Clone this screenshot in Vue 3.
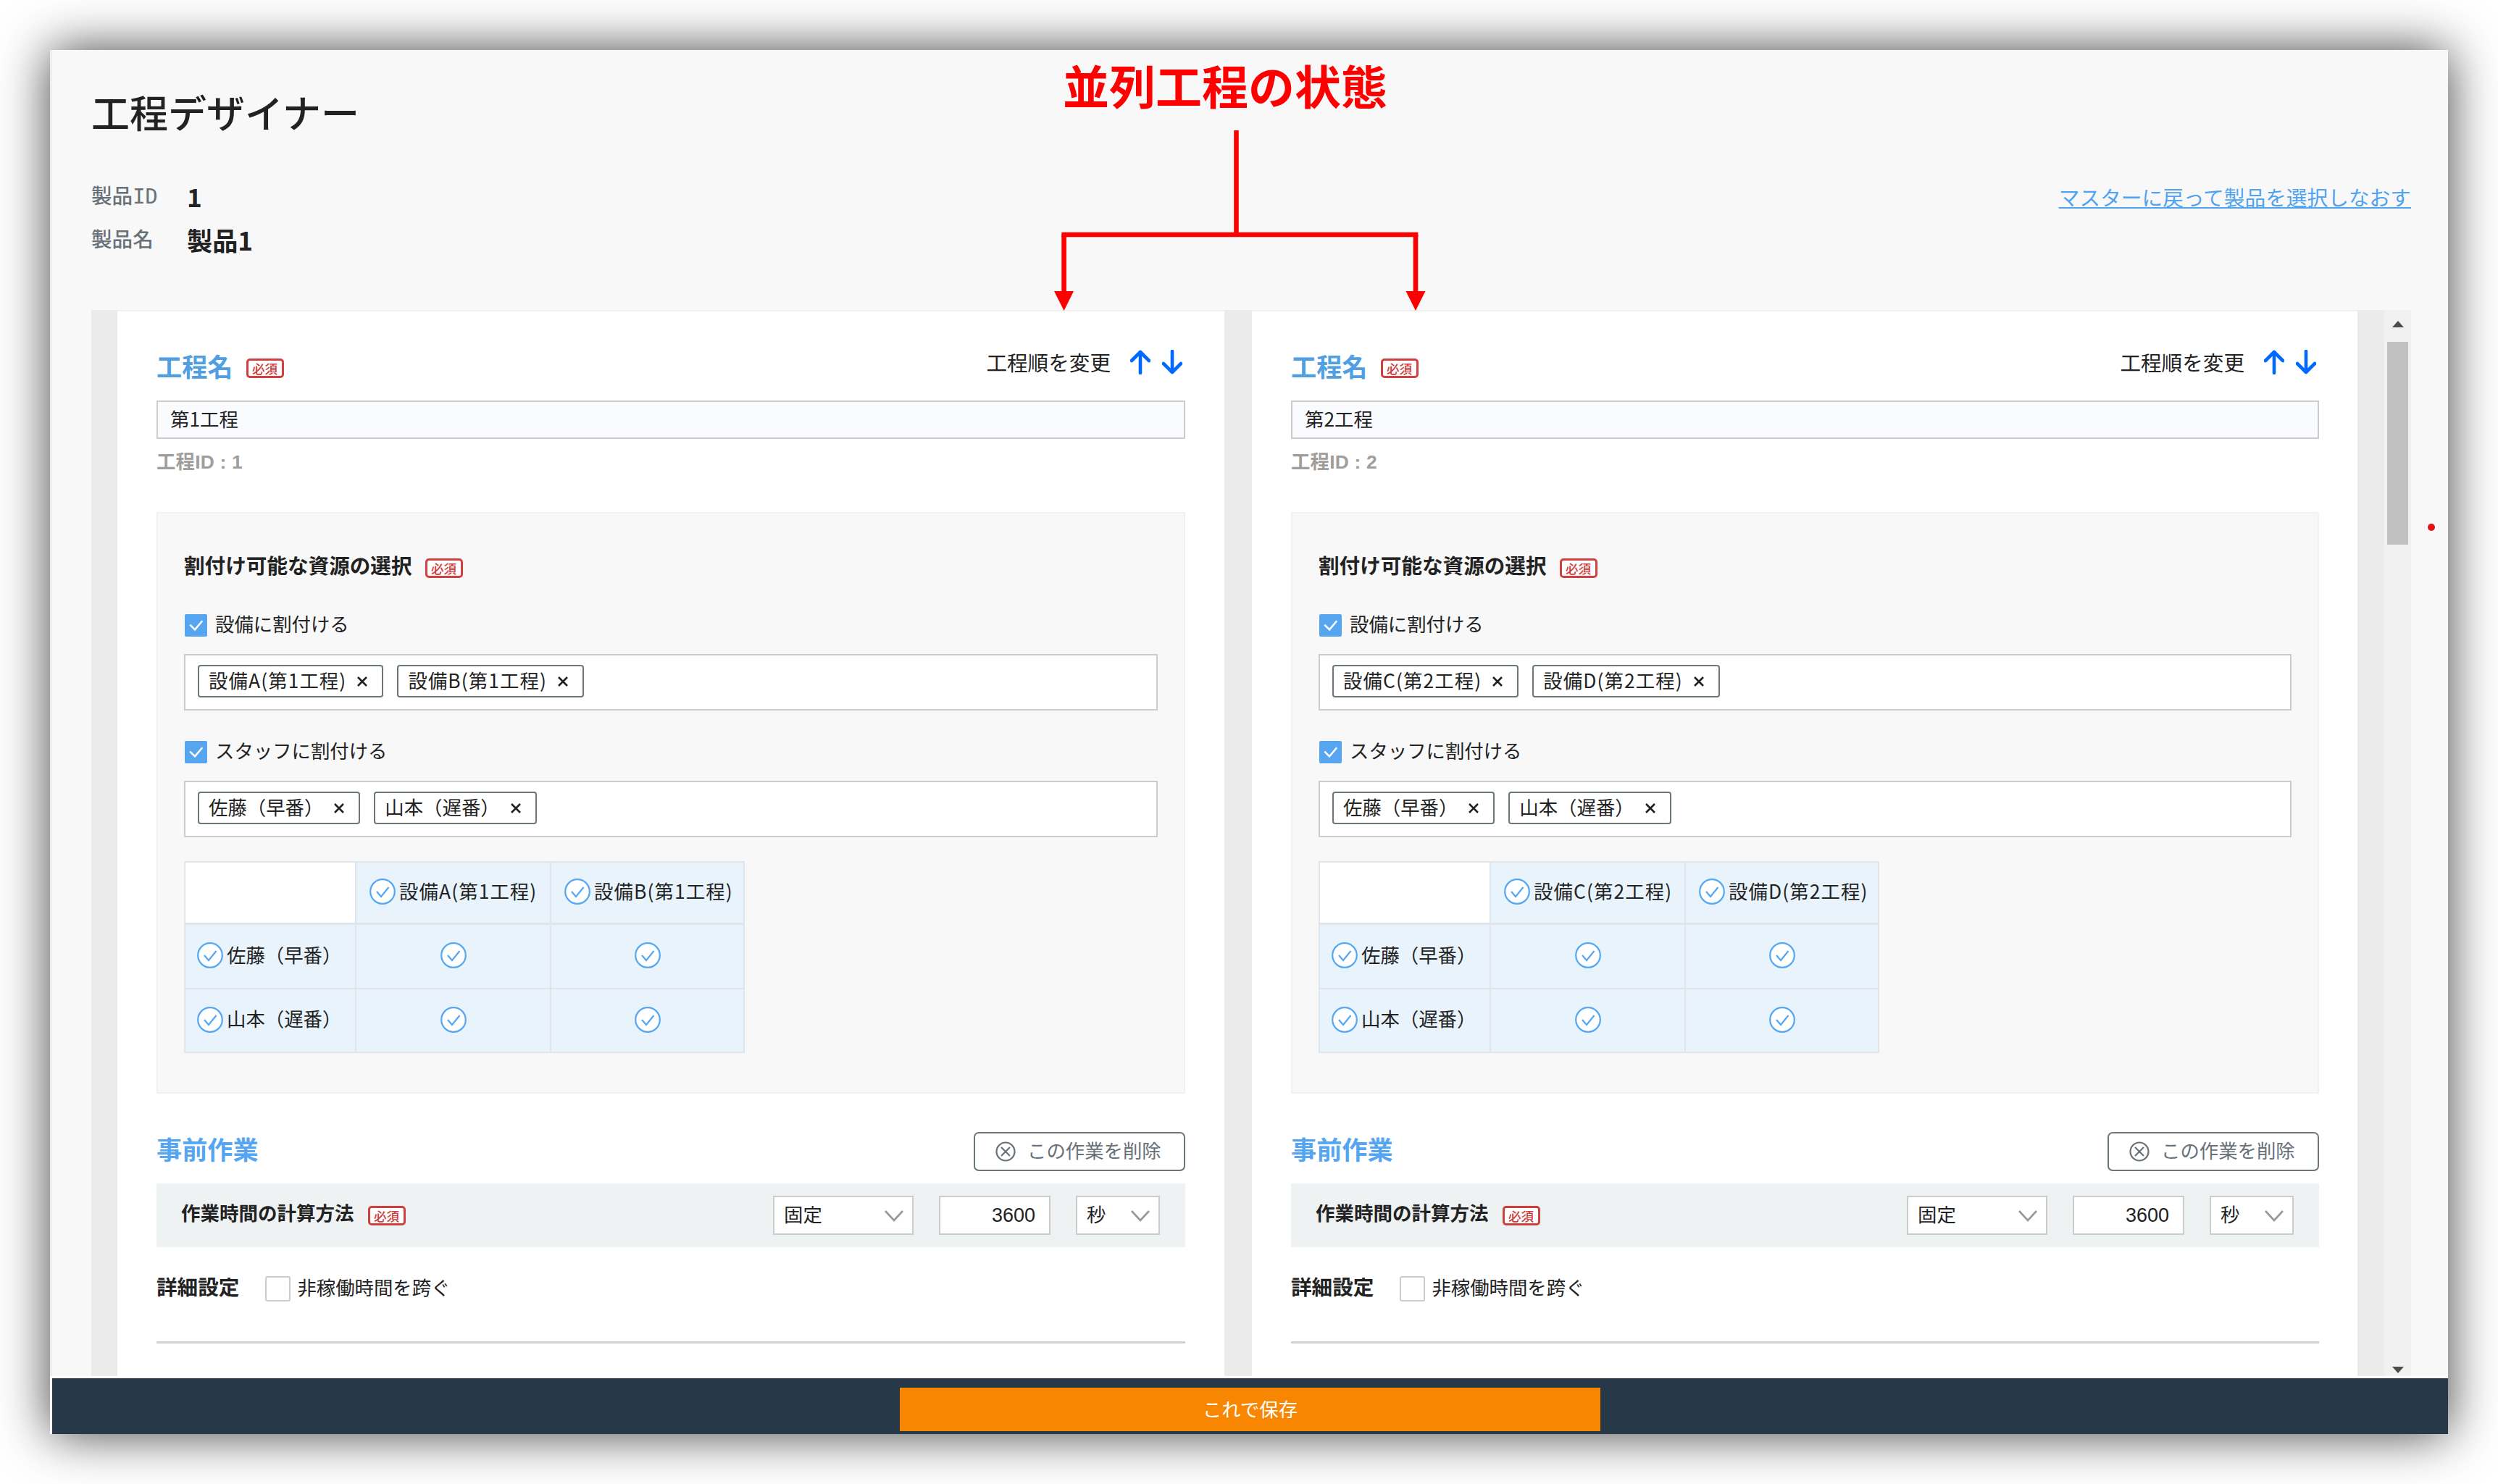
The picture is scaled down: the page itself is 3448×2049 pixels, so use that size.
<template>
  <div class="stage">
    <div class="window">
      <header class="header">
        <h1>工程デザイナー</h1>
        <div class="product">
          <dl>
            <div class="row">
              <dt>製品ID</dt>
              <dd>1</dd>
            </div>
            <div class="row">
              <dt>製品名</dt>
              <dd>製品1</dd>
            </div>
          </dl>
          <a class="back">マスターに戻って製品を選択しなおす</a>
        </div>
      </header>

      <main class="scroll">
        <section class="panel" v-for="p in processes" :key="p.id">
          <div class="panel-head">
            <h2>工程名</h2>
            <span class="required">必須</span>
            <div class="order">
              <span>工程順を変更</span>
              <svg class="arrow" viewBox="0 0 28 34"><path d="M14 32V3M2 15L14 3l12 12" /></svg>
              <svg class="arrow" viewBox="0 0 28 34"><path d="M14 2v29M2 19l12 12 12-12" /></svg>
            </div>
          </div>
          <div class="name-input">{{ p.name }}</div>
          <p class="process-id">工程ID : {{ p.id }}</p>

          <div class="resource">
            <div class="resource-title">
              <h3>割付け可能な資源の選択</h3>
              <span class="required">必須</span>
            </div>
            <template v-for="g in p.groups" :key="g.label">
              <div class="check-row">
                <span class="checkbox checked">
                  <svg viewBox="0 0 32 32"><path d="M7.500 15l7 7L25 9.500" /></svg>
                </span>
                <span class="label">{{ g.label }}</span>
              </div>
              <div class="tags">
                <span class="tag" v-for="t in g.items" :key="t">
                  <span class="label" :class="{ wide: g.wide }">{{ t }}</span>
                  <svg viewBox="0 0 16 16"><path d="M2 2l12 12M14 2L2 14" /></svg>
                </span>
              </div>
            </template>
            <div class="matrix">
              <div class="cell empty"></div>
              <div class="cell head" v-for="m in p.groups[0].items" :key="m">
                <svg class="circle" viewBox="0 0 36 36"><circle cx="18" cy="18" r="16.8" /><path d="M10 18l6 7 10.500-13" /></svg>
                <span class="label wide">{{ m }}</span>
              </div>
              <template v-for="s in p.groups[1].items" :key="s">
                <div class="cell">
                  <svg class="circle" viewBox="0 0 36 36"><circle cx="18" cy="18" r="16.8" /><path d="M10 18l6 7 10.500-13" /></svg>
                  <span class="label">{{ s }}</span>
                </div>
                <div class="cell center" v-for="m in p.groups[0].items" :key="m">
                  <svg class="circle" viewBox="0 0 36 36"><circle cx="18" cy="18" r="16.8" /><path d="M10 18l6 7 10.500-13" /></svg>
                </div>
              </template>
            </div>
          </div>

          <div class="work-head">
            <h2>事前作業</h2>
            <button class="delete">
              <svg viewBox="0 0 28 28"><circle cx="14" cy="14" r="12.500" /><path d="M8 8l12 12M20 8L8 20" /></svg>
              <span class="label">この作業を削除</span>
            </button>
          </div>
          <div class="calc">
            <h4>作業時間の計算方法</h4>
            <span class="required">必須</span>
            <div class="fields">
              <div class="select method">
                <span class="label">固定</span>
                <svg viewBox="0 0 26 16"><path d="M1 1l12 13L25 1" /></svg>
              </div>
              <div class="number">3600</div>
              <div class="select unit">
                <span class="label">秒</span>
                <svg viewBox="0 0 26 16"><path d="M1 1l12 13L25 1" /></svg>
              </div>
            </div>
          </div>
          <div class="detail">
            <h3>詳細設定</h3>
            <span class="checkbox"></span>
            <span>非稼働時間を跨ぐ</span>
          </div>
          <hr />
        </section>

        <div class="scrollbar">
          <svg viewBox="0 0 16 9"><path d="M0 9L8 0l8 9z" /></svg>
          <div class="thumb"></div>
          <svg class="down" viewBox="0 0 16 9"><path d="M0 0h16L8 9z" /></svg>
        </div>
      </main>

      <footer class="footer">
        <button class="save">これで保存</button>
      </footer>
    </div>

    <!-- 注釈 -->
    <div class="note">並列工程の状態</div>
    <svg class="note-lines" viewBox="0 0 520 250">
      <path class="line" d="M255.500 0V147M17.600 222V144M503 222V144" />
      <path class="bar" d="M14.300 144H506.400" />
      <path class="tip" d="M4 222h27L17.600 249zM489.500 222h27L503 249z" />
    </svg>
    <span class="dot"></span>
  </div>
</template>

<script setup>
import { ref } from 'vue';

const staff = ['佐藤（早番）', '山本（遅番）'];

const processes = ref([
  {
    id: 1,
    name: '第1工程',
    groups: [
      { label: '設備に割付ける', items: ['設備A(第1工程)', '設備B(第1工程)'], wide: true },
      { label: 'スタッフに割付ける', items: staff },
    ],
  },
  {
    id: 2,
    name: '第2工程',
    groups: [
      { label: '設備に割付ける', items: ['設備C(第2工程)', '設備D(第2工程)'], wide: true },
      { label: 'スタッフに割付ける', items: staff },
    ],
  },
]);
</script>

<style>
body {
  margin: 0;
  background: #fff;
  overflow: hidden;
}
</style>

<style scoped>
* {
  box-sizing: border-box;
}

h1, h2, h3, h4, p, dl, dd {
  margin: 0;
}

svg {
  display: block;
  flex: none;
  fill: none;
}

.stage {
  position: relative;
  width: 3448px;
  height: 2049px;
  padding: 69px;
  overflow: hidden;
  font-family: "Noto Sans CJK JP", sans-serif;
  font-size: 26.4px;
  line-height: 40px;
  color: #222;
  white-space: nowrap;
}

.window {
  display: flex;
  flex-direction: column;
  width: 3310px;
  height: 1911px;
  background: #f8f8f8;
  border-left: 3px solid #eceff0;
  box-shadow: 0 0 66px rgba(0, 0, 0, 0.75);
}

.label {
  margin-bottom: 4px;
}

.wide {
  letter-spacing: 1.1px;
}

.header {
  height: 359px;
  padding: 45px 51px 0 54px;
}

h1 {
  font-size: 53px;
  font-weight: 500;
  line-height: 80px;
}

.product {
  display: flex;
  justify-content: space-between;
  margin-top: 47px;
}

.row {
  display: flex;
  align-items: center;
  height: 60px;
}

dt {
  width: 132px;
  font-family: "DejaVu Sans Mono", "Noto Sans CJK JP", sans-serif;
  font-size: 28.600px;
  font-weight: 500;
  color: #687078;
}

dd {
  font-size: 35.200px;
  font-weight: 700;
}

.back {
  margin-top: 11px;
  font-size: 28.700px;
  color: #4fa3ef;
  text-decoration: underline;
  text-decoration-thickness: 2px;
  text-underline-offset: 2px;
}

.scroll {
  display: flex;
  height: 1472px;
  margin: 0 51px 0 54px;
  padding-left: 36px;
  overflow: hidden;
  background: #ebebeb;
}

.panel {
  width: 1528px;
  margin-right: 38px;
  padding: 50px 54px 0;
  background: #fff;
  border-top: 2px solid #eef2f2;
}

.panel:nth-child(2) {
  width: 1526px;
  margin-right: 37px;
  padding-right: 53px;
}

.panel-head {
  display: flex;
  align-items: center;
  height: 50px;
}

h2 {
  font-size: 35.200px;
  font-weight: 700;
  line-height: 50px;
  color: #519fe3;
}

.required {
  width: 52px;
  height: 27px;
  margin: 6px 0 0 18px;
  border: 3px solid #d13f3f;
  border-radius: 5px;
  background: #fff;
  color: #cf3a3a;
  font-size: 17.600px;
  font-weight: 500;
  line-height: 21px;
  text-align: center;
}

.order {
  display: flex;
  align-items: center;
  gap: 16px;
  margin: -10px 4px 0 auto;
  font-size: 28.600px;
}

.arrow {
  width: 28px;
  height: 34px;
  stroke: #0069ff;
  stroke-width: 4.600;
  stroke-linecap: round;
  stroke-linejoin: round;
}

.order span {
  margin-right: 11px;
}

.name-input {
  height: 53px;
  margin-top: 23px;
  padding-left: 17px;
  border: 2px solid #ccc;
  background: #fafbfe;
  line-height: 45px;
}

.process-id {
  margin-top: 12px;
  font-family: "Liberation Sans", "Noto Sans CJK JP", sans-serif;
  font-weight: 700;
  letter-spacing: 0.2px;
  color: #a09d9a;
}

.resource {
  height: 803px;
  margin-top: 49px;
  padding: 51px 36px 0;
  background: #f8f8f8;
  border: 2px solid #eef2f2;
}

.resource-title {
  display: flex;
  align-items: center;
}

.resource .required {
  margin-top: 9px;
}

h3 {
  font-size: 28.600px;
  font-weight: 700;
  line-height: 40px;
}

.check-row {
  display: flex;
  align-items: center;
  gap: 10px;
  height: 40px;
  margin-top: 43px;
}

.tags + .check-row {
  margin-top: 37px;
}

.checkbox {
  width: 35px;
  height: 35px;
  border: 2px solid #ccc;
  border-radius: 3px;
  background: #fff;
}

.checkbox.checked {
  width: 33px;
  height: 33px;
  border: 1px solid #fff;
  background: #55a5f0;
}

.checked svg {
  stroke: #fff;
  stroke-width: 2.600;
}

.tags {
  display: flex;
  gap: 19px;
  height: 78px;
  margin-top: 20px;
  padding: 13px 17px;
  border: 2px solid #ccc;
  background: #fff;
}

.tag {
  display: flex;
  align-items: center;
  gap: 14px;
  height: 45px;
  padding: 0 19px 0 13px;
  border: 2px solid #6c7778;
  border-radius: 4px;
}

.tag svg {
  width: 16px;
  height: 16px;
  stroke: #222;
  stroke-width: 2.600;
}

.matrix {
  display: grid;
  grid-template-columns: 236px 269px 267px;
  grid-template-rows: 86px 89px 88px;
  width: 774px;
  margin-top: 33px;
  border: solid #dfe5ea;
  border-width: 2px 0 0 2px;
}

.cell {
  display: flex;
  align-items: center;
  gap: 5px;
  padding: 0 0 3px 16px;
  border: solid #dfe5ea;
  border-width: 0 2px 2px 0;
  background: #e8f3fc;
}

.cell .label {
  margin-bottom: 3px;
}

.cell.empty, .cell.head {
  border-bottom-width: 3px;
}

.cell.head {
  padding-left: 18px;
}

.cell.empty {
  background: #fff;
}

.cell.center {
  justify-content: center;
  padding-left: 0;
}

.circle {
  width: 36px;
  height: 36px;
  stroke: #55a7f2;
  stroke-width: 2.200;
}

.circle circle {
  fill: #fff;
}

.work-head {
  display: flex;
  align-items: center;
  justify-content: space-between;
  height: 54px;
  margin-top: 53px;
}

.work-head h2 {
  margin-top: -8px;
  color: #55a5f0;
}

.delete {
  display: flex;
  align-items: center;
  gap: 16px;
  height: 54px;
  width: 292px;
  padding: 0 0 0 28px;
  border: 2.5px solid #6c7778;
  border-radius: 7px;
  background: #fff;
  color: #687078;
  font: inherit;
}

.delete svg {
  width: 28px;
  height: 28px;
  stroke: #687078;
  stroke-width: 2.200;
}

.calc {
  display: flex;
  align-items: center;
  height: 88px;
  margin-top: 17px;
  padding: 0 35px 0 34px;
  background: #eef2f2;
}

h4 {
  margin-top: -9px;
  font-size: 26.500px;
  font-weight: 700;
}

.calc .required {
  margin: 0 0 0 19px;
}

.fields {
  display: flex;
  gap: 35px;
  margin-left: auto;
}

.select, .number {
  display: flex;
  align-items: center;
  height: 54px;
  border: 2px solid #ccc;
  background: #fff;
}

.select {
  justify-content: space-between;
  padding: 0 12px 0 13px;
}

.select svg {
  width: 26px;
  height: 16px;
  margin-top: 2px;
  stroke: #999;
  stroke-width: 2.600;
}

.method {
  width: 194px;
}

.unit {
  width: 116px;
}

.number {
  justify-content: flex-end;
  width: 154px;
  padding-right: 19px;
  font-family: "Liberation Sans", sans-serif;
  font-size: 27px;
}

.detail {
  display: flex;
  align-items: center;
  height: 40px;
  margin-top: 36px;
}

.detail h3 {
  margin-top: -5px;
}

.detail .checkbox {
  margin: 3px 9px 0 36px;
}

.detail span:last-child {
  margin-top: -2px;
}

hr {
  height: 3px;
  margin: 54px 0 0;
  border: 0;
  background: #d0d2d0;
}

.scrollbar {
  display: flex;
  flex-direction: column;
  align-items: center;
  flex: 1;
  padding: 15px 0 4px;
  background: #f1f1f1;
}

.scrollbar svg {
  width: 16px;
  height: 9px;
  fill: #4c4c4c;
}

.scrollbar .down {
  margin-top: auto;
}

.thumb {
  width: 29px;
  height: 280px;
  margin-top: 20px;
  background: #c1c1c1;
}

.footer {
  display: flex;
  justify-content: center;
  height: 80px;
  padding: 13px 0 0 0;
  border-top: 3px solid #fff;
  background: #273849;
  box-shadow: -3px 0 #fff;
}

.save {
  width: 967px;
  height: 60px;
  padding: 0 0 3px;
  border: 0;
  background: #f88600;
  color: #fff;
  font: inherit;
}

.note {
  position: absolute;
  left: 1467px;
  top: 68px;
  font-size: 64px;
  font-weight: 700;
  line-height: 96px;
  color: #f00;
}

.note-lines {
  position: absolute;
  left: 1451px;
  top: 180px;
  width: 520px;
  height: 250px;
}

.line, .bar {
  stroke: #f00;
  stroke-width: 6.600;
}

.tip {
  fill: #f00;
}

.dot {
  position: absolute;
  left: 3351px;
  top: 723px;
  width: 10px;
  height: 10px;
  border-radius: 50%;
  background: #e81010;
}
</style>
